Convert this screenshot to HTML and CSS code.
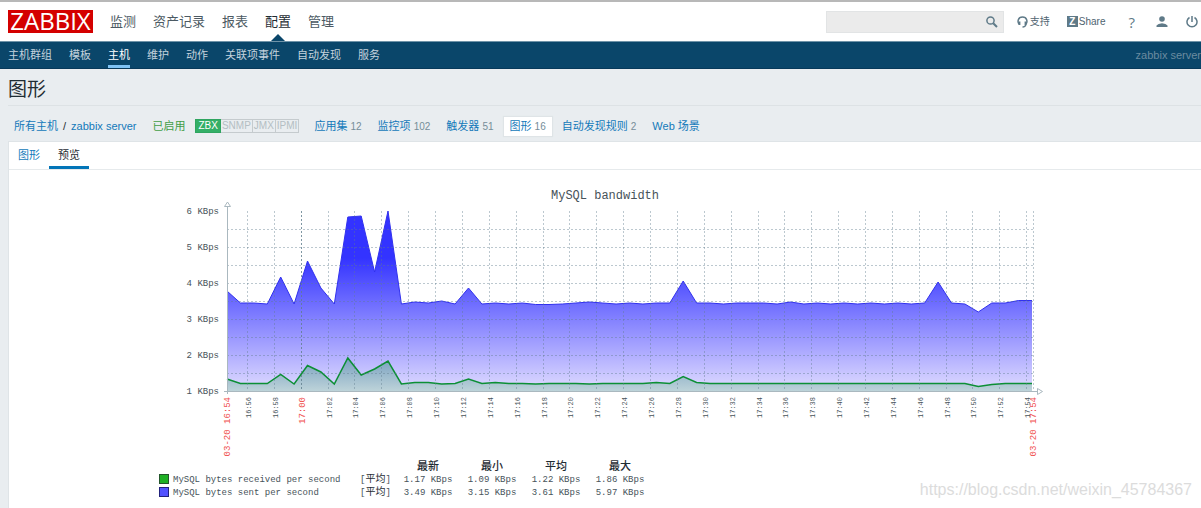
FILE: index.html
```html
<!DOCTYPE html>
<html lang="zh-CN">
<head>
<meta charset="utf-8">
<title>图形</title>
<link rel="stylesheet" href="styles.css">
</head>
<body>
<header class="top">
  <a class="logo" href="#">ZABBIX</a>
  <nav class="main-nav">
    <a href="#">监测</a>
    <a href="#">资产记录</a>
    <a href="#">报表</a>
    <a href="#" class="active">配置</a>
    <a href="#">管理</a>
  </nav>
  <form class="search">
    <input type="text" aria-label="搜索">
    <button type="button" aria-label="搜索">
      <svg width="12" height="12" viewBox="0 0 12 12"><circle cx="4.5" cy="4.5" r="3.6"/><path d="M7.2 7.2L11 11" stroke-width="2"/></svg>
    </button>
  </form>
  <div class="tools">
    <a class="support" href="#"><svg width="11" height="12" viewBox="0 0 11 12"><path d="M2 8C.3 6 .8 1 5.500 1S10.700 6 9 8M8.800 8.500Q8.500 11 5.500 11"/><path d="M2.400 5.500v3.500M8.600 5.500v3.500" stroke-width="2"/></svg>支持</a>
    <a class="share" href="#"><span class="zbadge">Z</span>Share</a>
    <a class="help" href="#">?</a>
    <a class="user" href="#" aria-label="用户"><svg width="12" height="12" viewBox="0 0 12 12"><g class="solid"><circle cx="6" cy="3" r="2.800"/><path d="M.5 11V9.500Q2 7.500 6 7.300 10 7.500 11.500 9.500V11z"/></g></svg></a>
    <a class="power" href="#" aria-label="退出"><svg width="12" height="12" viewBox="0 0 12 12"><path d="M3.500 1.500a5 5 0 1 0 5 0M6 0v6"/></svg></a>
  </div>
</header>
<nav class="sub-nav">
  <a href="#">主机群组</a>
  <a href="#">模板</a>
  <a href="#" class="active">主机</a>
  <a href="#">维护</a>
  <a href="#">动作</a>
  <a href="#">关联项事件</a>
  <a href="#">自动发现</a>
  <a href="#">服务</a>
  <span class="server">zabbix server</span>
</nav>
<main>
  <h1>图形</h1>
  <div class="crumbs">
    <a href="#">所有主机</a><span class="slash">/</span><a href="#">zabbix server</a>
    <span class="enabled">已启用</span>
    <span class="status"><b>ZBX</b><i>SNMP</i><i>JMX</i><i>IPMI</i></span>
    <span class="links">
      <span class="link"><a href="#">应用集</a> <small>12</small></span>
      <span class="link"><a href="#">监控项</a> <small>102</small></span>
      <span class="link"><a href="#">触发器</a> <small>51</small></span>
      <span class="link selected"><a href="#">图形</a> <small>16</small></span>
      <span class="link"><a href="#">自动发现规则</a> <small>2</small></span>
      <span class="link"><a href="#">Web 场景</a></span>
    </span>
  </div>
  <section class="panel">
    <div class="tabs">
      <a href="#">图形</a>
      <a href="#" class="active">预览</a>
    </div>
    <svg class="chart" id="chart" viewBox="9 170 1192 290" role="img" aria-label="MySQL bandwidth">
      <defs>
        <linearGradient id="sent" gradientUnits="userSpaceOnUse" x1="0" y1="211" x2="0" y2="391">
          <stop offset="0" stop-color="#3333ff"/><stop offset=".26" stop-color="#3333ff"/><stop offset="1" stop-color="#e0dcff"/>
        </linearGradient>
        <linearGradient id="received" gradientUnits="userSpaceOnUse" x1="0" y1="358" x2="0" y2="391">
          <stop offset="0" stop-color="#779fc0"/><stop offset="1" stop-color="#bdd3d9"/>
        </linearGradient>
      </defs>
      <text class="title" x="605" y="199" text-anchor="middle">MySQL bandwidth</text>
    </svg>
    <table class="legend">
      <thead><tr><td class="name"></td><td class="fn"></td><th>最新</th><th>最小</th><th>平均</th><th>最大</th></tr></thead>
      <tbody>
        <tr><td class="name"><span class="key green"></span>MySQL bytes received per second</td><td class="fn">[<em>平均</em>]</td><td>1.17 KBps</td><td>1.09 KBps</td><td>1.22 KBps</td><td>1.86 KBps</td></tr>
        <tr><td class="name"><span class="key blue"></span>MySQL bytes sent per second</td><td class="fn">[<em>平均</em>]</td><td>3.49 KBps</td><td>3.15 KBps</td><td>3.61 KBps</td><td>5.97 KBps</td></tr>
      </tbody>
    </table>
  </section>
</main>
<div class="watermark">https://blog.csdn.net/weixin_45784367</div>
<script src="chart.js"></script>
</body>
</html>
```

FILE: styles.css
```css
* { box-sizing: border-box; }
body {
  margin: 0;
  min-height: 100vh;
  display: flex;
  flex-direction: column;
  overflow: hidden;
  background: #e9edf0;
  color: #1f2c33;
  font: 11px/16px "Liberation Sans", "Noto Sans CJK SC", sans-serif;
}
a { color: #1379ba; text-decoration: none; white-space: nowrap; }

.top {
  display: flex;
  align-items: center;
  height: 42px;
  padding-left: 8px;
  border-top: 2px solid #b8b8b8;
  border-bottom: 1px solid #6f93a8;
  background: #fff;
}
.logo {
  width: 85px;
  height: 23px;
  background: #d40000;
  color: #fff;
  font: 24px/22px "Open Sans", sans-serif;
  text-align: center;
}
.main-nav { display: flex; gap: 17px; margin-left: 17px; font-size: 13px; line-height: 39px; }
.main-nav a { color: #4c5a63; }
.main-nav .active { position: relative; color: #1f2c33; }
.main-nav .active::after {
  content: "";
  position: absolute;
  left: 6px;
  bottom: 0;
  border: 7px solid transparent;
  border-top: 0;
  border-bottom-color: #0a466a;
}
.search {
  display: flex;
  width: 178px;
  height: 22px;
  margin-left: auto;
  background: #ebebeb;
  border: 1px solid #e2e4e5;
}
.search input { flex: 1; min-width: 0; border: 0; background: none; }
.search button { width: 22px; padding: 0; border: 0; background: none; line-height: 0; }
.top svg { fill: none; stroke: #5f7a88; stroke-width: 1.5; }
.top svg .solid { fill: #5f7a88; stroke: none; }
.tools { display: flex; align-items: center; margin-left: 13px; padding-right: 3px; }
.tools a { display: flex; align-items: center; color: #4f6470; }
.tools .support { gap: 2px; font-size: 10px; }
.share { gap: 1px; margin-left: 17px; }
.tools .share { font-size: 10px; }
.zbadge {
  width: 11px;
  height: 11px;
  background: #5f7a88;
  color: #fff;
  font-weight: bold;
  line-height: 11px;
  text-align: center;
}
.tools .help { margin-left: 23px; color: #5f7a88; font: 15px/16px "Open Sans", sans-serif; }
.user { margin-left: 21px; }
.power { margin-left: 18px; }

.sub-nav {
  display: flex;
  gap: 17px;
  height: 27px;
  padding-left: 8px;
  background: #0a466a;
  border-bottom: 1px solid #07395a;
  line-height: 26px;
}
.sub-nav a { color: #c4d3dd; }
.sub-nav .active { color: #fff; border-bottom: 3px solid #7fc3f5; }
.server { margin-left: auto; color: #6b8ba0; white-space: nowrap; }

main { flex: 1; display: flex; flex-direction: column; padding-left: 8px; }
h1 {
  margin: 0;
  height: 37px;
  border-bottom: 1px solid #dde2e5;
  font-size: 19px;
  font-weight: normal;
  line-height: 42px;
}
.crumbs { display: flex; align-items: center; height: 35px; padding: 5px 0 0 6px; }
.slash { margin: 0 5px; }
.enabled { margin-left: 16px; color: #429e47; }
.status { display: flex; margin-left: 10px; font-size: 10px; line-height: 12px; }
.status b, .status i {
  padding: 0 1px;
  border: 1px solid #c5cbce;
  color: #b4bec3;
  font-weight: normal;
  font-style: normal;
}
.status i { border-left-width: 0; }
.status b { padding: 0 2px; border-color: #2fa560; background: #34af67; color: #fff; }
.links { display: flex; gap: 4px; margin-left: 9px; }
.link { padding: 1px 6px; white-space: nowrap; }
.link small { font-size: 10px; color: #768d99; }
.selected { background: #fff; box-shadow: 0 0 1px 1px #dfe4e7; }

.panel { flex: 1; background: #fff; border: 1px solid #dfe4e7; border-width: 1px 0 0 1px; }
.tabs { display: flex; height: 28px; border-bottom: 1px solid #e6eaec; line-height: 27px; }
.tabs a { padding: 0 9px; }
.tabs .active { color: #1f2c33; border-bottom: 3px solid #0275b8; }

.chart { display: block; width: 100%; height: auto; }
.chart text { fill: #47535a; font: 9px "Liberation Mono", monospace; }
.chart .title { font-size: 12px; }
.chart .minute { font-size: 7px; }
.chart .major { fill: #f05050; }
.grid { fill: none; stroke: #5f7d8c; stroke-opacity: .42; stroke-dasharray: 2 2; }
.grid.hour { stroke-opacity: .8; }
.axis { fill: none; stroke: #aab8bf; }
.area-sent { fill: url(#sent); }
.area-received { fill: url(#received); }
.line-sent, .line-received { fill: none; stroke: #3131ee; }
.line-received { stroke: #0c8f35; stroke-width: 1.5; }

.legend {
  margin-left: 150px;
  border-collapse: collapse;
  color: #47535a;
  font: 9px/12px "Liberation Mono", "Noto Sans CJK SC", monospace;
  text-align: center;
  white-space: nowrap;
}
.legend td, .legend th { width: 64px; height: 13px; padding: 0; line-height: 12px; }
.legend th { color: #1f2c33; font-size: 11px; font-weight: 500; }
.legend .name { width: 201px; text-align: left; }
.legend .fn { width: 36px; text-align: left; }
.legend em { color: #1f2c33; font-size: 10px; font-style: normal; }
.key {
  display: inline-block;
  width: 10px;
  height: 10px;
  margin-right: 4px;
  vertical-align: middle;
  border: 1px solid #23562b;
  background: #1fb025;
}
.key.blue { border-color: #22227c; background: #5252ff; }

.watermark {
  position: absolute;
  right: 9px;
  bottom: 8px;
  color: #dcdcdc;
  font-size: 16px;
  line-height: 20px;
}
```

FILE: chart.js
```js
const svg = document.getElementById('chart');
const LEFT = 227, RIGHT = 1032, TOP = 211, BASE = 391;

function add(tag, attrs, text) {
  const el = document.createElementNS('http://www.w3.org/2000/svg', tag);
  for (const key in attrs) el.setAttribute(key, attrs[key]);
  if (text) el.textContent = text;
  svg.appendChild(el);
}

const sent = [291,303,303,304,277,304,261,288,304,217,216,272,211,304,302,303,301,304,288,304,
  303,304,303,304.5,304.5,304,303,302,303,304,303,304,303,303,281,303,303,304,303,303,
  303,304,302,304,303,304,303,304,303,304,303,304,303,282,303,304,312,303,303,300.5,300.5];
const received = [379,383.5,383.5,383.5,374.5,384,365.5,372,384,358,375,369,361,384,382.5,382.5,384,383.5,379,383.5,
  382.5,383.5,383.5,384,383.5,383.5,383.5,384,383.5,383.5,383.5,383.5,382.5,383.5,376.5,382.5,383.5,383.5,383.5,383.5,
  383.5,383.5,383.5,383.5,383.5,383.5,383.5,383.5,383.5,383.5,383.5,383.5,383.5,383.5,383.5,383.5,386.5,384.5,383.5,383.5,383.5];

function series(values, name) {
  const step = (RIGHT - LEFT) / (values.length - 1);
  const points = values.map((y, i) => (LEFT + i * step).toFixed(1) + ',' + y).join(' ');
  add('polygon', { class: 'area-' + name, points: `${LEFT},${BASE} ${points} ${RIGHT},${BASE}` });
  add('polyline', { class: 'line-' + name, points });
}
series(sent, 'sent');
series(received, 'received');

for (let i = 1; i < 10; i++) {
  const y = TOP + i * 18 + 0.5;
  add('path', { class: 'grid', d: `M${LEFT} ${y}H1033` });
}
for (let k = 6; k >= 1; k--) {
  add('text', { x: 219, y: TOP + (6 - k) * 36 + 3, 'text-anchor': 'end' }, k + ' KBps');
}

function vertical(x, label, major) {
  add('text', {
    class: major ? 'major' : 'minute',
    transform: `translate(${x + 3} 397) rotate(-90)`,
    'text-anchor': 'end'
  }, label);
}
for (let i = 0; i < 30; i++) {
  const x = Math.round(247 + i * 26.87) + 0.5;
  const minutes = 56 + i * 2;
  const label = (16 + Math.floor(minutes / 60)) + ':' + String(minutes % 60).padStart(2, '0');
  const hour = minutes === 60;
  add('path', { class: hour ? 'grid hour' : 'grid', d: `M${x} ${TOP}V${BASE}` });
  vertical(x, label, hour);
}
add('path', { class: 'grid', d: `M1033.5 ${TOP}V${BASE}` });
vertical(227, '03-20 16:54', true);
vertical(1033, '03-20 17:54', true);

add('path', { class: 'axis', d: 'M227.5 207V394M224 391.5H1037M224.5 206.500L227.500 202L230.500 206.500ZM1037.500 388.500L1042.500 391.500L1037.500 394.500Z' });
```
